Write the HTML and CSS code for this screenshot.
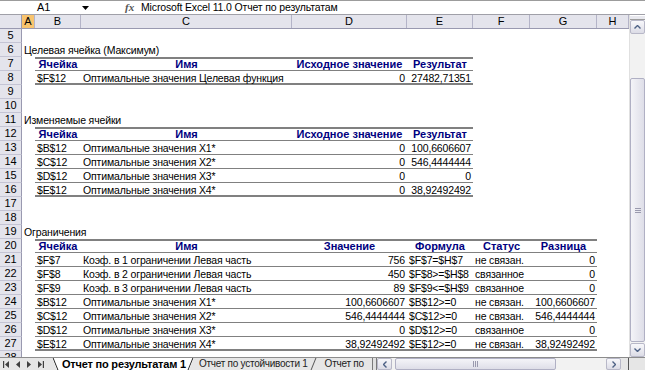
FILE: index.html
```html
<!DOCTYPE html>
<html lang="ru">
<head>
    <meta charset="UTF-8">
    <title>Отчет по результатам 1</title>
    <link rel="stylesheet" href="styles.css">
</head>
<body>
<div class="window">
    <div class="formula-bar">
        <div class="name-box">
            <span class="cell-ref">A1</span>
            <svg class="drop" width="7" height="4" viewBox="0 0 7 4"><path d="M0 0H7L3.5 4Z" fill="#000"/></svg>
        </div>
        <div class="fx">fx</div>
        <div class="formula">Microsoft Excel 11.0 Отчет по результатам</div>
    </div>

    <div class="workspace">
        <div class="sheet">
            <div class="row col-heads">
                <div class="corner"></div>
                <div class="ch sel">A</div>
                <div class="ch">B</div>
                <div class="ch">C</div>
                <div class="ch">D</div>
                <div class="ch">E</div>
                <div class="ch">F</div>
                <div class="ch">G</div>
                <div class="ch">H</div>
            </div>

            <div class="row"><div class="rh">5</div></div>
            <div class="row"><div class="rh">6</div><div class="title">Целевая ячейка (Максимум)</div></div>
            <div class="row hd">
                <div class="rh">7</div><div></div>
                <div class="b th">Ячейка</div><div class="b th">Имя</div><div class="b th">Исходное значение</div><div class="b th">Результат</div>
            </div>
            <div class="row last">
                <div class="rh">8</div><div></div>
                <div class="b">$F$12</div><div class="b">Оптимальные значения Целевая функция</div><div class="b num">0</div><div class="b num">27482,71351</div>
            </div>
            <div class="row"><div class="rh">9</div></div>
            <div class="row"><div class="rh">10</div></div>
            <div class="row"><div class="rh">11</div><div class="title">Изменяемые ячейки</div></div>
            <div class="row hd">
                <div class="rh">12</div><div></div>
                <div class="b th">Ячейка</div><div class="b th">Имя</div><div class="b th">Исходное значение</div><div class="b th">Результат</div>
            </div>
            <div class="row dr">
                <div class="rh">13</div><div></div>
                <div class="b">$B$12</div><div class="b">Оптимальные значения X1*</div><div class="b num">0</div><div class="b num">100,6606607</div>
            </div>
            <div class="row dr">
                <div class="rh">14</div><div></div>
                <div class="b">$C$12</div><div class="b">Оптимальные значения X2*</div><div class="b num">0</div><div class="b num">546,4444444</div>
            </div>
            <div class="row dr">
                <div class="rh">15</div><div></div>
                <div class="b">$D$12</div><div class="b">Оптимальные значения X3*</div><div class="b num">0</div><div class="b num">0</div>
            </div>
            <div class="row last">
                <div class="rh">16</div><div></div>
                <div class="b">$E$12</div><div class="b">Оптимальные значения X4*</div><div class="b num">0</div><div class="b num">38,92492492</div>
            </div>
            <div class="row"><div class="rh">17</div></div>
            <div class="row"><div class="rh">18</div></div>
            <div class="row"><div class="rh">19</div><div class="title">Ограничения</div></div>
            <div class="row hd">
                <div class="rh">20</div><div></div>
                <div class="b th">Ячейка</div><div class="b th">Имя</div><div class="b th">Значение</div><div class="b th">Формула</div><div class="b th">Статус</div><div class="b th">Разница</div>
            </div>
            <div class="row dr">
                <div class="rh">21</div><div></div>
                <div class="b">$F$7</div><div class="b">Коэф. в 1 ограничении Левая часть</div><div class="b num">756</div><div class="b">$F$7=$H$7</div><div class="b">не связан.</div><div class="b num">0</div>
            </div>
            <div class="row dr">
                <div class="rh">22</div><div></div>
                <div class="b">$F$8</div><div class="b">Коэф. в 2 ограничении Левая часть</div><div class="b num">450</div><div class="b">$F$8&gt;=$H$8</div><div class="b">связанное</div><div class="b num">0</div>
            </div>
            <div class="row dr">
                <div class="rh">23</div><div></div>
                <div class="b">$F$9</div><div class="b">Коэф. в 3 ограничении Левая часть</div><div class="b num">89</div><div class="b">$F$9&lt;=$H$9</div><div class="b">связанное</div><div class="b num">0</div>
            </div>
            <div class="row dr">
                <div class="rh">24</div><div></div>
                <div class="b">$B$12</div><div class="b">Оптимальные значения X1*</div><div class="b num">100,6606607</div><div class="b">$B$12&gt;=0</div><div class="b">не связан.</div><div class="b num">100,6606607</div>
            </div>
            <div class="row dr">
                <div class="rh">25</div><div></div>
                <div class="b">$C$12</div><div class="b">Оптимальные значения X2*</div><div class="b num">546,4444444</div><div class="b">$C$12&gt;=0</div><div class="b">не связан.</div><div class="b num">546,4444444</div>
            </div>
            <div class="row dr">
                <div class="rh">26</div><div></div>
                <div class="b">$D$12</div><div class="b">Оптимальные значения X3*</div><div class="b num">0</div><div class="b">$D$12&gt;=0</div><div class="b">связанное</div><div class="b num">0</div>
            </div>
            <div class="row last">
                <div class="rh">27</div><div></div>
                <div class="b">$E$12</div><div class="b">Оптимальные значения X4*</div><div class="b num">38,92492492</div><div class="b">$E$12&gt;=0</div><div class="b">не связан.</div><div class="b num">38,92492492</div>
            </div>
            <div class="row"><div class="rh">28</div></div>
        </div>

        <div class="vscroll">
            <div class="split"></div>
            <div class="sbtn">
                <svg width="7" height="4" viewBox="0 0 7 4"><path d="M0.5 3.5L3.5 0.5L6.5 3.5" fill="none" stroke="#4d6185" stroke-width="1.4"/></svg>
            </div>
            <div class="track">
                <div class="thumb"><span class="grip"></span></div>
            </div>
            <div class="sbtn">
                <svg width="7" height="4" viewBox="0 0 7 4"><path d="M0.5 0.5L3.5 3.5L6.5 0.5" fill="none" stroke="#4d6185" stroke-width="1.4"/></svg>
            </div>
        </div>
    </div>

    <div class="tabbar">
        <div class="tab-nav">
            <svg width="6" height="7" viewBox="0 0 6 7"><path d="M0 0H1.2V7H0Z M6 0V7L2 3.5Z" fill="#404040"/></svg>
            <svg width="4" height="7" viewBox="0 0 4 7"><path d="M4 0V7L0 3.5Z" fill="#404040"/></svg>
            <svg width="4" height="7" viewBox="0 0 4 7"><path d="M0 0V7L4 3.5Z" fill="#404040"/></svg>
            <svg width="6" height="7" viewBox="0 0 6 7"><path d="M0 0V7L4 3.5Z M4.8 0H6V7H4.8Z" fill="#404040"/></svg>
        </div>
        <div class="tabs">
            <div class="tab active">Отчет по результатам 1</div>
            <div class="tab">Отчет по устойчивости 1</div>
            <div class="tab cut">Отчет по</div>
        </div>
        <div class="hscroll">
            <div class="hsplit"></div>
            <div class="hbtn">
                <svg width="4" height="7" viewBox="0 0 4 7"><path d="M3.5 0.5L0.5 3.5L3.5 6.5" fill="none" stroke="#4d6185" stroke-width="1.4"/></svg>
            </div>
            <div class="htrack">
                <div class="hthumb"><span class="hgrip"></span></div>
            </div>
            <div class="hbtn">
                <svg width="4" height="7" viewBox="0 0 4 7"><path d="M0.5 0.5L3.5 3.5L0.5 6.5" fill="none" stroke="#4d6185" stroke-width="1.4"/></svg>
            </div>
        </div>
        <div class="corner-box"></div>
    </div>
</div>
</body>
</html>
```

FILE: styles.css
```css
* {
    box-sizing: border-box;
}
html, body {
    margin: 0;
    padding: 0;
}
body {
    width: 645px;
    height: 370px;
    overflow: hidden;
    background: #fff;
    color: #000;
    font-family: "Liberation Sans", Arial, sans-serif;
    font-size: 10.5px;
}
.window {
    display: flex;
    flex-direction: column;
    height: 370px;
    border-bottom: 1px solid #000;
}

/* formula bar */
.formula-bar {
    display: flex;
    align-items: center;
    height: 15px;
    flex: none;
    border-top: 1px solid #9c9c9c;
    border-bottom: 1px solid #a0a0a8;
    background: #fff;
    line-height: 13px;
}
.name-box {
    display: flex;
    align-items: center;
    width: 92px;
    height: 100%;
    padding-left: 37px;
    font-size: 11px;
}
.drop {
    margin-left: 32px;
}
.fx {
    width: 49px;
    padding-left: 33px;
    font-family: "Liberation Serif", serif;
    font-size: 11px;
    font-style: italic;
    font-weight: bold;
    color: #555;
}
.formula {
    flex: 1;
    white-space: nowrap;
    letter-spacing: -0.15px;
}

/* sheet */
.workspace {
    display: flex;
    height: 342px;
    flex: none;
}
.sheet {
    width: 629px;
    overflow: hidden;
}
.row {
    display: grid;
    grid-template-columns: 22px 13px 46px 211px 115px 66px 57px 67px 1fr;
    height: 14px;
    line-height: 14px;
    white-space: nowrap;
}
.col-heads {
    background: #e4e4ec;
    border-bottom: 1px solid #9999b0;
    line-height: 13px;
    font-size: 11px;
}
.corner {
    border-right: 1px solid #9999b0;
}
.ch {
    text-align: center;
    border-right: 1px solid #b4b4c8;
}
.ch.sel {
    background: #f8c46e;
}
.rh {
    text-align: center;
    font-size: 11px;
    background: #e4e4ec;
    border-right: 1px solid #9999b0;
    border-bottom: 1px solid #c4c4d4;
    line-height: 13px;
}
.title {
    padding-left: 2px;
    overflow: visible;
    letter-spacing: -0.15px;
}
.b {
    padding: 0 2px 0 2px;
    letter-spacing: -0.15px;
}
.num {
    text-align: right;
}
.th {
    text-align: center;
    font-size: 11px;
    font-weight: bold;
    letter-spacing: 0;
    color: #000080;
}
.hd .b {
    box-shadow: inset 0 2px #808080, inset 0 -1px #808080;
}
.dr .b {
    box-shadow: inset 0 -1px #808080;
}
.last .b {
    box-shadow: inset 0 -2px #808080;
}

/* vertical scrollbar */
.vscroll {
    display: flex;
    flex-direction: column;
    width: 16px;
    background: #f2f2f2;
    border-left: 1px solid #e0e0e0;
}
.split {
    height: 5px;
    border-top: 1px solid #fff;
    border-bottom: 1px solid #9c9c9c;
    background: #e8e8ee;
}
.sbtn, .hbtn {
    display: flex;
    align-items: center;
    justify-content: center;
    background: linear-gradient(#f8f8fb, #dcdce6);
    border: 1px solid #b8b8c8;
    border-radius: 2px;
}
.sbtn {
    height: 14px;
}
.track {
    flex: 1;
    padding-top: 44px;
    padding-bottom: 1px;
    display: flex;
}
.thumb {
    flex: 1;
    display: flex;
    align-items: center;
    justify-content: center;
    background: linear-gradient(90deg, #f4f4f8, #dedee8);
    border: 1px solid #b0b0c4;
    border-radius: 2px;
}
.grip {
    width: 6px;
    height: 5px;
    border-top: 1px solid #9a9aae;
    border-bottom: 1px solid #9a9aae;
    background: linear-gradient(#9a9aae, #9a9aae) center / 100% 1px no-repeat;
}

/* sheet tabs */
.tabbar {
    display: flex;
    flex: 1;
    background: #e6e6e6;
    border-top: 1px solid #8c8c8c;
    line-height: 12px;
    white-space: nowrap;
}
.tab-nav {
    display: flex;
    align-items: center;
    gap: 7px;
    width: 52px;
    padding-left: 3px;
}
.tabs {
    display: flex;
    width: 320px;
    overflow: hidden;
}
.tab {
    position: relative;
    padding: 0 9px 0 5px;
    font-size: 10px;
    letter-spacing: -0.25px;
    color: #222;
}
.tab::after {
    content: "";
    position: absolute;
    right: 3px;
    top: 0;
    width: 1px;
    height: 12px;
    background: #555;
    transform: skewX(-22deg);
}
.tab.active {
    font-size: 11px;
    font-weight: bold;
    letter-spacing: -0.2px;
    color: #000;
    padding: 0 8px 0 10px;
    background: #fff;
    clip-path: polygon(0 0, 100% 0, calc(100% - 5px) 100%, 5px 100%);
}
.tab.active::before {
    content: "";
    position: absolute;
    left: 3px;
    top: 0;
    width: 1px;
    height: 12px;
    background: #222;
    transform: skewX(22deg);
}
.tab.active::after {
    background: #222;
}
.tab.cut {
    padding: 0 0 0 8px;
}
.tab.cut::after {
    display: none;
}
.hscroll {
    display: flex;
    width: 256px;
    align-items: stretch;
}
.hsplit {
    width: 5px;
    border-left: 1px solid #7a7a7a;
    border-right: 1px solid #7a7a7a;
    background: #e0e0e0;
}
.hbtn {
    width: 15px;
}
.htrack {
    flex: 1;
    display: flex;
    padding: 0 50px 0 3px;
    background: #f2f2f2;
}
.hthumb {
    flex: 1;
    display: flex;
    align-items: center;
    justify-content: center;
    background: linear-gradient(#f4f4f8, #dedee8);
    border: 1px solid #b0b0c4;
    border-radius: 2px;
}
.hgrip {
    width: 5px;
    height: 6px;
    border-left: 1px solid #9a9aae;
    border-right: 1px solid #9a9aae;
    background: linear-gradient(#9a9aae, #9a9aae) center / 1px 100% no-repeat;
}
.hscroll .hbtn:last-child {
    margin-right: 7px;
}
.corner-box {
    flex: 1;
    border-left: 1px solid #555;
    background: #e6e6e6;
}
```
